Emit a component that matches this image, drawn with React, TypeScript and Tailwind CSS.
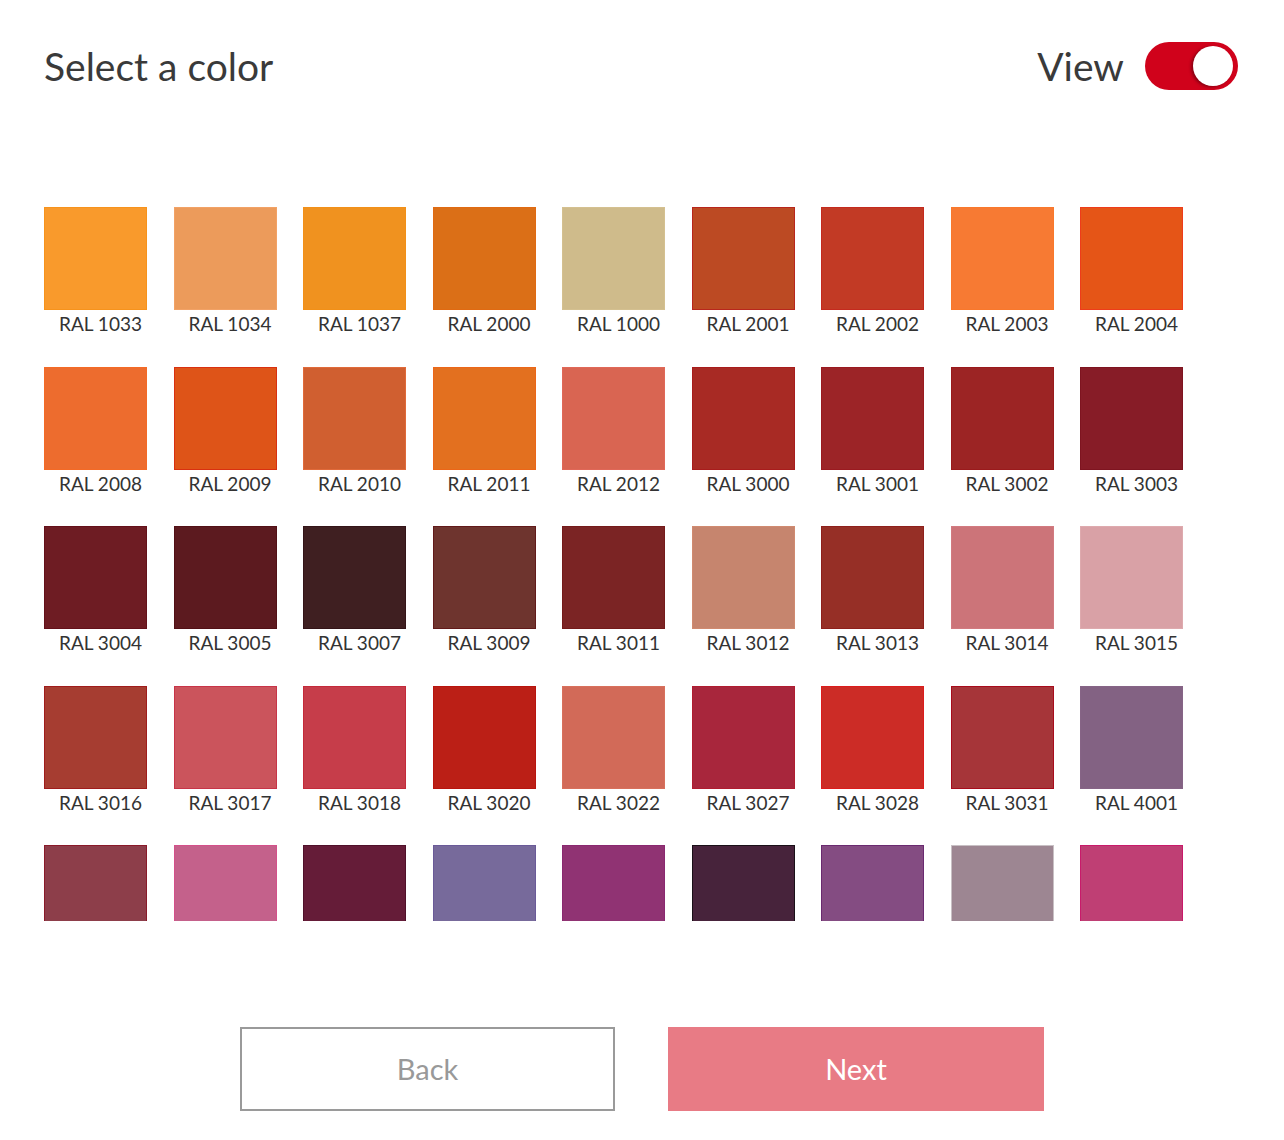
import React from "react";

type Swatch = { name: string; cls: string };

const swatches: Swatch[] = [
  { name: "RAL 1033", cls: "bg-[#f99a2c] border-[#f7931c]" },
  { name: "RAL 1034", cls: "bg-[#ec9b5b] border-[#f2a266]" },
  { name: "RAL 1037", cls: "bg-[#f0921f] border-[#f29018]" },
  { name: "RAL 2000", cls: "bg-[#db6f17] border-[#e06a12]" },
  { name: "RAL 1000", cls: "bg-[#cfbb8b] border-[#d4c090]" },
  { name: "RAL 2001", cls: "bg-[#bc4a23] border-[#b8261c]" },
  { name: "RAL 2002", cls: "bg-[#c23a25] border-[#c42a1e]" },
  { name: "RAL 2003", cls: "bg-[#f77a33] border-[#f9782c]" },
  { name: "RAL 2004", cls: "bg-[#e55517] border-[#ee3c1a]" },

  { name: "RAL 2008", cls: "bg-[#ed6c2e] border-[#f46a26]" },
  { name: "RAL 2009", cls: "bg-[#de5418] border-[#d93010]" },
  { name: "RAL 2010", cls: "bg-[#d05f30] border-[#e06a3a]" },
  { name: "RAL 2011", cls: "bg-[#e3701f] border-[#ec6618]" },
  { name: "RAL 2012", cls: "bg-[#d96552] border-[#e06858]" },
  { name: "RAL 3000", cls: "bg-[#a82a24] border-[#a81c1c]" },
  { name: "RAL 3001", cls: "bg-[#9c2427] border-[#9a1a20]" },
  { name: "RAL 3002", cls: "bg-[#9c2424] border-[#9a1a1c]" },
  { name: "RAL 3003", cls: "bg-[#871c27] border-[#7e1420]" },

  { name: "RAL 3004", cls: "bg-[#6e1c23] border-[#64101a]" },
  { name: "RAL 3005", cls: "bg-[#5c1a1f] border-[#521016]" },
  { name: "RAL 3007", cls: "bg-[#3f1f21] border-[#341418]" },
  { name: "RAL 3009", cls: "bg-[#6e342e] border-[#621a1a]" },
  { name: "RAL 3011", cls: "bg-[#7b2424] border-[#741a1a]" },
  { name: "RAL 3012", cls: "bg-[#c6856e] border-[#d08a70]" },
  { name: "RAL 3013", cls: "bg-[#962f26] border-[#8e201c]" },
  { name: "RAL 3014", cls: "bg-[#cc7479] border-[#d27a80]" },
  { name: "RAL 3015", cls: "bg-[#d9a1a6] border-[#deaaae]" },

  { name: "RAL 3016", cls: "bg-[#a63d31] border-[#a01c1c]" },
  { name: "RAL 3017", cls: "bg-[#cb545c] border-[#c83448]" },
  { name: "RAL 3018", cls: "bg-[#c63d4a] border-[#c42a3a]" },
  { name: "RAL 3020", cls: "bg-[#bb1f16] border-[#b8140e]" },
  { name: "RAL 3022", cls: "bg-[#d26a58] border-[#d8705c]" },
  { name: "RAL 3027", cls: "bg-[#a8263c] border-[#b01c30]" },
  { name: "RAL 3028", cls: "bg-[#cc2c26] border-[#dc1c1c]" },
  { name: "RAL 3031", cls: "bg-[#a63539] border-[#a80c1c]" },
  { name: "RAL 4001", cls: "bg-[#836283] border-[#866486]" },

  { name: "RAL 4002", cls: "bg-[#8d3e4a] border-[#8a1a2a]" },
  { name: "RAL 4003", cls: "bg-[#c4618b] border-[#d4508a]" },
  { name: "RAL 4004", cls: "bg-[#651c38] border-[#50102a]" },
  { name: "RAL 4005", cls: "bg-[#776a9b] border-[#6a5a98]" },
  { name: "RAL 4006", cls: "bg-[#903373] border-[#8a2870]" },
  { name: "RAL 4007", cls: "bg-[#47233b] border-[#1a1018]" },
  { name: "RAL 4008", cls: "bg-[#844c82] border-[#6a2a70]" },
  { name: "RAL 4009", cls: "bg-[#9d8692] border-[#c8c0c4]" },
  { name: "RAL 4010", cls: "bg-[#bf3f74] border-[#c81a6a]" },
];

export default function App() {
  return (
    <div className="w-[1284px] h-[1140px] bg-white font-['Lato','Liberation_Sans',sans-serif] overflow-hidden">
      <div className="pl-[44px] pr-[46px] pt-[42px]">
        <div className="flex items-center justify-between h-[48px]">
          <h1 className="text-[39px] leading-[48px] text-[#3a3a3a] font-normal">Select a color</h1>
          <div className="flex items-center gap-[21px]">
            <span className="text-[39px] leading-[48px] text-[#3a3a3a]">View</span>
            <div className="relative w-[93px] h-[48px] rounded-full bg-[#d0021b]">
              <div className="absolute right-[5px] top-[4px] w-[40px] h-[40px] rounded-full bg-white shadow-[-2px_1px_3px_rgba(0,0,0,0.35)]" />
            </div>
          </div>
        </div>

        <div className="mt-[117px] h-[714px] overflow-hidden">
          <div className="grid grid-cols-[repeat(9,103px)] gap-x-[26.5px] gap-y-[26.5px]">
            {swatches.map((s) => (
              <div key={s.name} className="flex flex-col">
                <div className={`w-[103px] h-[103px] border ${s.cls}`} />
                <div className="h-[30px] leading-[27px] pl-[10px] text-center text-[19px] text-[#333333] whitespace-nowrap">
                  {s.name}
                </div>
              </div>
            ))}
          </div>
        </div>
      </div>

      <div className="mt-[106px] flex justify-center gap-[53px]">
        <button className="w-[375px] h-[84px] border-2 border-[#9a9a9a] bg-white text-[29px] text-[#999999]">
          Back
        </button>
        <button className="w-[376px] h-[84px] bg-[#e87b85] text-[29px] text-white">
          Next
        </button>
      </div>
    </div>
  );
}
